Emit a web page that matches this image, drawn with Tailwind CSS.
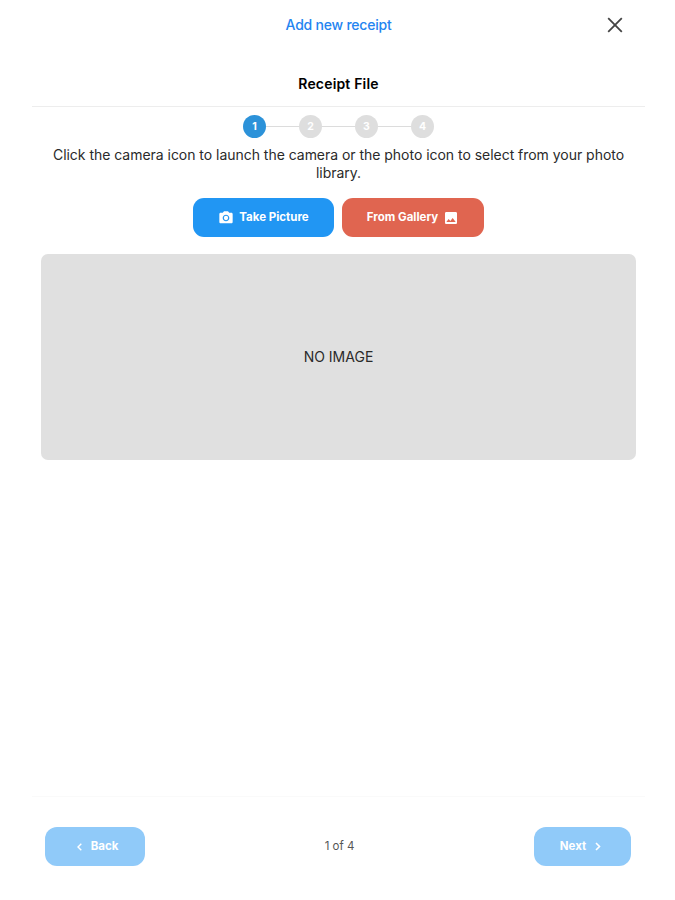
<!DOCTYPE html>
<html lang="en">
<head>
<meta charset="utf-8">
<title>Add new receipt</title>
<script src="https://cdn.jsdelivr.net/npm/@tailwindcss/browser@4"></script>
</head>
<body class="bg-white font-['Inter','Liberation_Sans',sans-serif] text-[#2a2a2a]">
<div class="ml-8 flex h-[900px] w-[613px] flex-col">
  <header class="grid h-[50px] shrink-0 grid-cols-[60px_1fr_60px] items-center">
    <span></span>
    <h1 class="pb-[2px] text-center text-[14px] font-medium tracking-[-0.22px] text-[#2484f0]">Add new receipt</h1>
    <button class="justify-self-end pr-[22px]" aria-label="Close">
      <svg class="block size-4" viewBox="0 0 16 16" fill="none" stroke="#444" stroke-width="1.8"><path d="M1.2 1.2 14.8 14.8M14.8 1.2 1.2 14.8"/></svg>
    </button>
  </header>
  <main class="flex grow flex-col">
    <div class="flex h-[57px] shrink-0 items-end justify-center border-b border-[#ededed] pb-[12px]">
      <h2 class="text-[14px] leading-5 font-semibold tracking-[0.17px] text-black">Receipt File</h2>
    </div>
    <div class="mt-[8px] flex items-center justify-center text-[10.5px] font-bold text-white">
      <span class="flex size-[23px] items-center justify-center rounded-full bg-[#2c92d9]">1</span>
      <i class="h-px w-[33px] bg-[#dcdcdc]"></i>
      <span class="flex size-[23px] items-center justify-center rounded-full bg-[#dedede]">2</span>
      <i class="h-px w-[33px] bg-[#dcdcdc]"></i>
      <span class="flex size-[23px] items-center justify-center rounded-full bg-[#dedede]">3</span>
      <i class="h-px w-[33px] bg-[#dcdcdc]"></i>
      <span class="flex size-[23px] items-center justify-center rounded-full bg-[#dedede]">4</span>
    </div>
    <p class="mt-[8px] mb-px text-center text-[14px] leading-[18px] tracking-[-0.03px]">Click the camera icon to launch the camera or the photo icon to select from your photo<br>library.</p>
    <div class="mt-[15px] flex justify-center gap-[8px] text-[11.5px] font-bold text-white">
      <button class="flex h-[39px] w-[141px] items-center justify-center gap-[5px] rounded-[11px] bg-[#2196f3]">
        <svg class="size-4" viewBox="0 0 24 24" fill="#fff"><circle cx="12" cy="12" r="3.2"/><path d="M9 2 7.17 4H4c-1.1 0-2 .9-2 2v12c0 1.1.9 2 2 2h16c1.1 0 2-.9 2-2V6c0-1.1-.9-2-2-2h-3.17L15 2H9zm3 15c-2.76 0-5-2.24-5-5s2.24-5 5-5 5 2.24 5 5-2.24 5-5 5z"/></svg>
        <span class="pt-px">Take Picture</span>
      </button>
      <button class="flex h-[39px] w-[142px] items-center justify-center gap-[5px] rounded-[11px] bg-[#e06550]">
        <span class="pt-px">From Gallery</span>
        <svg class="size-4" viewBox="0 0 24 24" fill="#fff"><path d="M21 19V5c0-1.1-.9-2-2-2H5c-1.1 0-2 .9-2 2v14c0 1.1.9 2 2 2h14c1.1 0 2-.9 2-2zM8.500 13.500l2.500 3.010L14.500 12l4.500 6H5l3.500-4.500z"/></svg>
      </button>
    </div>
    <div class="mr-[9px] ml-[9px] mt-[17px] flex h-[206px] items-center justify-center rounded-[7px] bg-[#e0e0e0] pb-[2px] text-[14px]">NO IMAGE</div>
  </main>
  <footer class="flex h-[104px] shrink-0 items-start justify-between border-t border-[#fafafa] pr-[14px] pl-[13px] pt-[30px] text-[11.5px] font-bold text-white">
    <button class="flex h-[39px] w-[100px] items-center justify-center gap-[9px] rounded-[12px] bg-[#90caf9] pl-[5px]">
      <svg class="h-[8px] w-[5px]" viewBox="0 0 5 8" fill="none" stroke="#fff" stroke-width="1.4"><path d="M4.300.700 1 4l3.300 3.300"/></svg>
      <span>Back</span>
    </button>
    <span class="text-[11.5px] leading-[39px] font-normal text-[#555]">1 of 4</span>
    <button class="flex h-[39px] w-[97px] items-center justify-center gap-[9px] rounded-[12px] bg-[#90caf9] pr-[4px]">
      <span>Next</span>
      <svg class="h-[9px] w-[6px]" viewBox="0 0 6 9" fill="none" stroke="#fff" stroke-width="1.600"><path d="M1 1l3.500 3.500L1 8"/></svg>
    </button>
  </footer>
</div>
</body>
</html>
